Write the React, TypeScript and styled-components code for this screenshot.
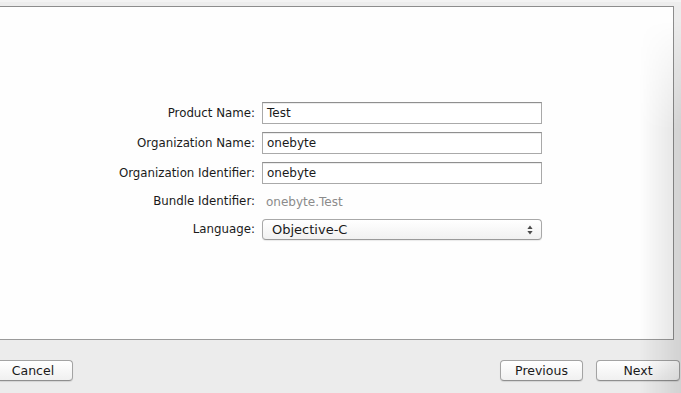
import styled, { createGlobalStyle } from "styled-components";

const GlobalStyle = createGlobalStyle`
  html, body {
    margin: 0;
    padding: 0;
    background: #ececec;
    font-family: "DejaVu Sans", "Liberation Sans", sans-serif;
    font-size: 12px;
    color: #1a1a1a;
  }
`;

const Window = styled.div`
  position: relative;
  width: 681px;
  height: 393px;
  overflow: hidden;
  display: flex;
  flex-direction: column;
  background: #ececec;
`;

const TopStrip = styled.div`
  height: 6px;
  background: #ededed;
  border-top: 2px solid #f3f3f3;
  box-sizing: border-box;
`;

const Panel = styled.div`
  height: 334px;
  box-sizing: border-box;
  margin-right: 7px;
  background: #fefefe;
  border-top: 1px solid #8d8d8d;
  border-bottom: 1px solid #9a9a9a;
  border-right: 1px solid #8d8d8d;
  padding-top: 95px;
`;

const Form = styled.div`
  display: grid;
  grid-template-columns: 255px 280px;
  column-gap: 7px;
  row-gap: 8px;
  align-items: center;
`;

const Label = styled.div`
  text-align: right;
  line-height: 15px;
  font-size: 11.8px;
`;

const Field = styled.div`
  height: 22px;
  box-sizing: border-box;
  border: 1px solid #a9a9a9;
  border-top-color: #8f8f8f;
  background: #fff;
  padding: 0 4px;
  display: flex;
  align-items: center;
  box-shadow: inset 0 1px 0 #ececec;
`;

const Static = styled.div<{ $muted?: boolean }>`
  height: 19px;
  display: flex;
  align-items: center;
  padding-left: 4px;
  color: ${(p) => (p.$muted ? "#8b8b8b" : "#1a1a1a")};
`;

const Popup = styled.div`
  height: 21px;
  box-sizing: border-box;
  border: 1px solid #a8a8a8;
  border-bottom-color: #9a9a9a;
  border-radius: 4px;
  background: linear-gradient(#ffffff, #f1f1f1);
  box-shadow: 0 1px 1px rgba(0, 0, 0, 0.08);
  padding: 0 8px 0 9px;
  display: flex;
  align-items: center;
  justify-content: space-between;
  font-size: 13px;
`;

const Footer = styled.div`
  flex: 1;
  display: flex;
  align-items: flex-start;
  justify-content: space-between;
  padding-top: 20px;
  padding-right: 1px;
`;

const ButtonGroup = styled.div`
  display: flex;
  gap: 13px;
`;

const Button = styled.div<{ $width: number }>`
  width: ${(p) => p.$width}px;
  height: 21px;
  box-sizing: border-box;
  border: 1px solid #a3a3a3;
  border-bottom-color: #8f8f8f;
  border-radius: 4px;
  background: linear-gradient(#ffffff, #f0f0f0);
  box-shadow: 0 1px 1px rgba(0, 0, 0, 0.1);
  display: flex;
  align-items: center;
  justify-content: center;
  font-size: 12.5px;
`;

const CancelButton = styled(Button)`
  margin-left: -3px;
  padding-right: 4px;
`;

const Shade = styled.div`
  position: absolute;
  right: 0;
  top: 20px;
  bottom: 0;
  width: 42px;
  pointer-events: none;
  background: linear-gradient(to right, rgba(0, 0, 0, 0), rgba(0, 0, 0, 0.11));
  -webkit-mask-image: linear-gradient(to bottom, transparent, #000 110px);
  mask-image: linear-gradient(to bottom, transparent, #000 110px);
`;

function Stepper() {
  return (
    <svg width="6" height="10" viewBox="0 0 6 10">
      <path d="M3 0.5 L5.6 4 H0.4 Z" fill="#4a4a4a" />
      <path d="M3 9.5 L5.6 6 H0.4 Z" fill="#4a4a4a" />
    </svg>
  );
}

export default function App() {
  return (
    <Window>
      <GlobalStyle />
      <TopStrip />
      <Panel>
        <Form>
          <Label>Product Name:</Label>
          <Field>Test</Field>
          <Label>Organization Name:</Label>
          <Field>onebyte</Field>
          <Label>Organization Identifier:</Label>
          <Field>onebyte</Field>
          <Label>Bundle Identifier:</Label>
          <Static $muted>onebyte.Test</Static>
          <Label>Language:</Label>
          <Popup>
            <span>Objective-C</span>
            <Stepper />
          </Popup>
        </Form>
      </Panel>
      <Footer>
        <CancelButton $width={76}>Cancel</CancelButton>
        <ButtonGroup>
          <Button $width={83}>Previous</Button>
          <Button $width={84}>Next</Button>
        </ButtonGroup>
      </Footer>
      <Shade />
    </Window>
  );
}
